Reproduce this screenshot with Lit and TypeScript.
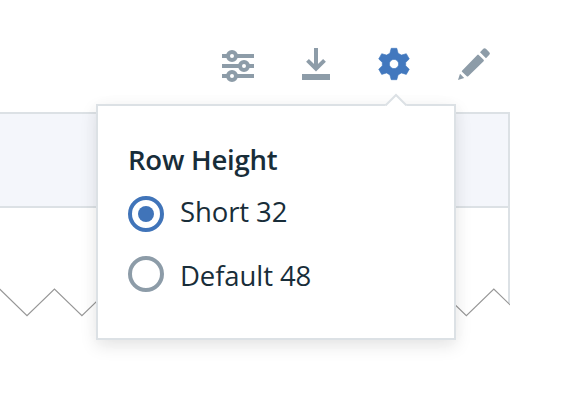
import { LitElement, html, css, svg } from "lit";
import { customElement, property, state } from "lit/decorators.js";
import { classMap } from "lit/directives/class-map.js";

const icons: Record<string, unknown> = {
  sliders: svg`<path d="M0 8h32M0 18h32M0 28h32" fill="none" stroke="currentColor" stroke-width="4"/>
    <g fill="#fff" stroke="currentColor" stroke-width="4"><circle cx="10" cy="8" r="4"/><circle cx="22" cy="18" r="4"/><circle cx="10" cy="28" r="4"/></g>`,
  download: svg`<path d="M16 0v20M7.500 12.400l8.500 8.200l8.500-8.200" fill="none" stroke="currentColor" stroke-width="4"/><path d="M2 26h28v6H2z" fill="currentColor"/>`,
  gear: svg`<path fill-rule="evenodd" fill="currentColor" stroke="currentColor" stroke-width=".6" stroke-linejoin="round" d="M13.200.3h5.600l1.300 4.900l3.300 1.900l4.900-1.400l3 5.200l-3.600 3.500v3.300l3.600 3.500l-3 5.200l-4.900-1.400l-3.300 1.900l-1.300 4.800h-5.600l-1.300-4.800l-3.300-1.900l-4.900 1.400l-3-5.200l3.600-3.500v-3.300L.7 10.900l3-5.200l4.900 1.400l3.300-1.900zM16 11.400a4.600 4.600 0 1 0 0 9.200a4.600 4.600 0 1 0 0-9.200z"/>`,
  pencil: svg`<path fill="currentColor" d="M0 32l2-6.200l4.200 4.200zM4 22.700L19.300 6.900q.7-.7 1.400 0l4.900 4.900q.7.700 0 1.400L10.200 28.200q-.7.700-1.400 0L4 23.800q-.5-.5 0-1.100zM22 4.200l3.300-3.400q1.300-1.300 2.600 0l3.400 3.400q1.300 1.300 0 2.600L28 10.200z"/>`,
};

@customElement("tool-icon")
class ToolIcon extends LitElement {
  @property() name = "sliders";
  static styles = css`
    :host { display: block; width: 32px; height: 32px; color: #8d9ca8; }
    :host([active]) { color: #4278be; }
    svg { display: block; overflow: visible; }
  `;
  render() {
    return html`<svg width="32" height="32" viewBox="0 0 32 32">${icons[this.name]}</svg>`;
  }
}

@customElement("row-height-menu")
class RowHeightMenu extends LitElement {
  @state() private selected = "Short 32";
  static styles = css`
    :host {
      display: block; box-sizing: border-box; position: relative;
      width: 360px; height: 236px; padding: 36px 30px;
      background: #fff; border: 2px solid #dce1e5;
      box-shadow: 0 6px 16px rgba(0, 0, 0, .1), 0 0 20px rgba(0, 0, 0, .02);
      color: #182d39;
    }
    .arrow { position: absolute; left: 287px; top: -13px; }
    h2 { margin: 0; font-size: 27.5px; line-height: 36px; font-weight: 600; letter-spacing: -.22px; white-space: nowrap; }
    .option { display: flex; align-items: flex-start; gap: 16px; height: 36px; cursor: pointer; }
    h2 + .option { margin-top: 18px; }
    .option + .option { margin-top: 24px; }
    .radio {
      display: flex; align-items: center; justify-content: center; box-sizing: border-box;
      flex: none; width: 36px; height: 36px; border: 4px solid #8d9ca8; border-radius: 50%;
    }
    .selected { border-color: #4074b9; }
    .dot { width: 16px; height: 16px; border-radius: 50%; background: #4074b9; }
    .label { font-size: 27.5px; line-height: 36px; letter-spacing: -.1px; white-space: nowrap; }
    h2 + .option .label { line-height: 32px; }
    .option:last-child .label { line-height: 40px; }
  `;
  render() {
    return html`
      <svg class="arrow" width="22" height="13" viewBox="0 0 22 13"><path d="M0 13L11 2l11 11z" fill="#fff"/><path d="M.5 12H1L11 2l10 10h.5" fill="none" stroke="#dce1e5" stroke-width="2"/></svg>
      <h2>Row Height</h2>
      ${["Short 32", "Default 48"].map((o) => {
        const on = o === this.selected;
        return html`<div class="option" @click=${() => (this.selected = o)}>
          <span class=${classMap({ radio: true, selected: on })}>${on ? html`<span class="dot"></span>` : ""}</span>
          <span class="label">${o}</span>
        </div>`;
      })}
    `;
  }
}

@customElement("app-root")
class AppRoot extends LitElement {
  static styles = css`
    :host {
      display: block; position: relative; width: 580px; height: 400px; overflow: hidden;
      background: #fff; font-family: "Open Sans", "Noto Sans", sans-serif;
    }
    .toolbar { display: flex; justify-content: flex-end; gap: 46px; padding: 48px 90px 32px 0; }
    .toolbar tool-icon:last-child { margin-left: 2px; }
    .table { width: 510px; }
    .head { box-sizing: border-box; height: 96px; background: #f4f6fb; border: solid #dce1e5; border-width: 2px 2px 2px 0; }
    .torn { display: block; }
    row-height-menu { position: absolute; left: 96px; top: 104px; }
  `;
  render() {
    const points = Array.from({ length: 21 }, (_, i) => `${-0.46 + i * 27.46},${i % 2 ? 107.7 : 81}`).join(" ");
    return html`
      <div class="toolbar">
        <tool-icon name="sliders"></tool-icon>
        <tool-icon name="download"></tool-icon>
        <tool-icon name="gear" active></tool-icon>
        <tool-icon name="pencil"></tool-icon>
      </div>
      <div class="table">
        <div class="head"></div>
        <svg class="torn" width="510" height="112" viewBox="0 0 510 112">
          <path d="M509 0v95" stroke="#dce1e5" stroke-width="2"/>
          <polyline points=${points} fill="none" stroke="#979797" stroke-width="1.2"/>
        </svg>
      </div>
      <row-height-menu></row-height-menu>
    `;
  }
}
